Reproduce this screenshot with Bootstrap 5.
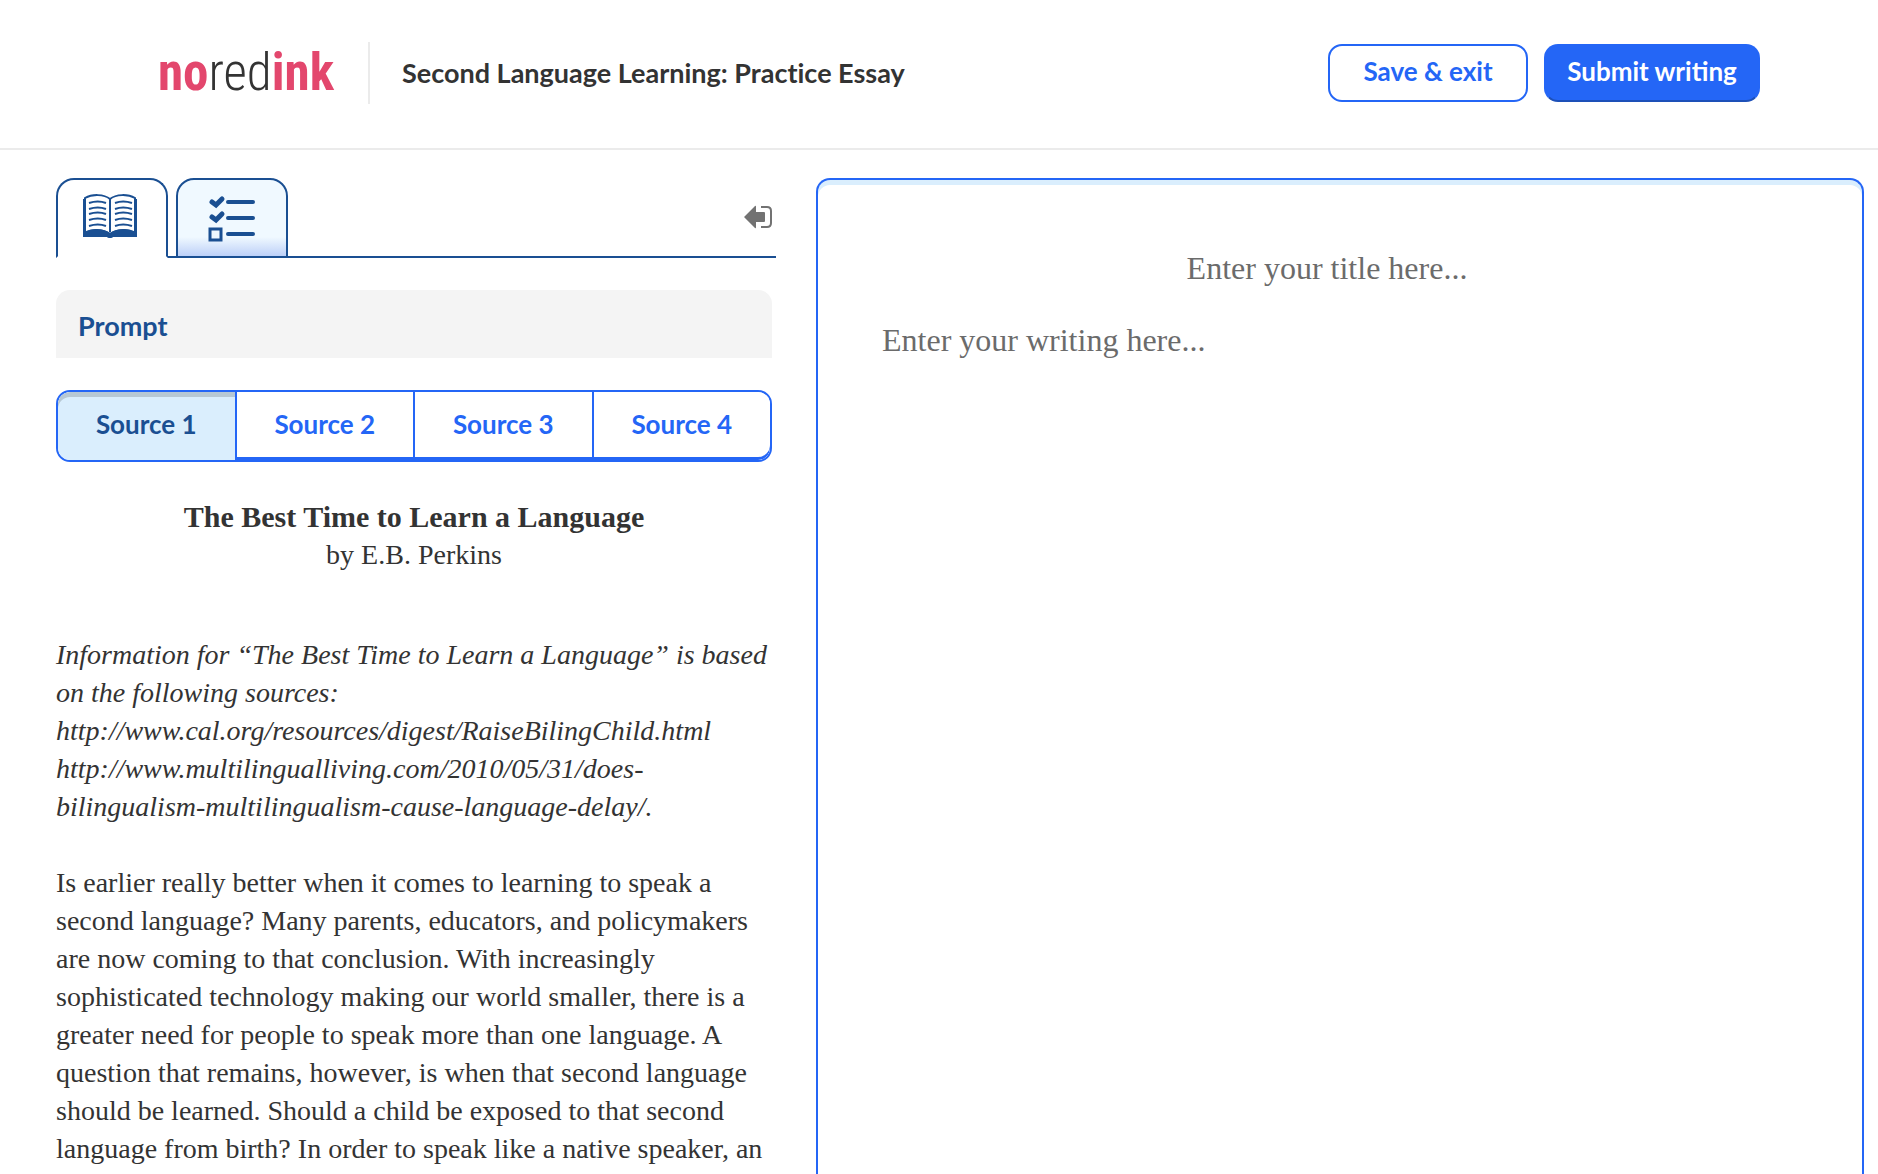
<!DOCTYPE html>
<html lang="en">
<head>
<meta charset="utf-8">
<meta name="viewport" content="width=device-width, initial-scale=1">
<title>Second Language Learning: Practice Essay</title>
<link href="https://cdn.jsdelivr.net/npm/bootstrap@5.3.0/dist/css/bootstrap.min.css" rel="stylesheet">
<style>
:root { --azure: #2466f6; --navy: #1a4f92; --ink: #333; --frost: #daeefd; }
body { font-family: Lato, "Open Sans", sans-serif; font-variant-ligatures: none; color: var(--ink); background: #fff; }
.topbar { border-bottom: 2px solid #ebebeb; padding: 42px 118px 44px 158px; }
.brand { font-family: "Liberation Sans Narrow", "Roboto Condensed", "Liberation Sans", sans-serif; font-weight: 300; font-size: 51px; line-height: 56px; color: var(--ink); }
.brand b { font-weight: 700; color: #e3476d; }
.page-title { font-size: 27px; font-weight: 700; line-height: 62px; border-left: 2px solid #ebebeb; margin: 0 0 0 34px; padding-left: 32px; }
.action { height: 58px; border: 2px solid var(--azure); border-radius: 14px; font-size: 26px; font-weight: 700; line-height: 30px; padding: 0 20px 4px; color: var(--azure); }
.action-exit { min-width: 200px; }
.action-submit { min-width: 216px; background: var(--azure); color: #fff; border-bottom-color: #1d50b8; }
.workspace { padding: 28px 14px 0 56px; gap: 40px; }
.reading { flex: 0 1 720px; min-width: 0; }
.strip { border-bottom: 2px solid var(--navy); gap: 8px; }
.strip .nav-link { width: 112px; height: 80px; padding: 0; margin-bottom: -2px; border: 2px solid var(--navy); border-radius: 18px 18px 0 0; color: var(--navy); background: linear-gradient(#f0f9ff 75%, #bdd0f8); }
.strip .nav-link.active { background: #fff; color: var(--navy); border-color: var(--navy) var(--navy) #fff; }
.collapse-btn { color: #727272; }
.panel-col { padding-right: 4px; }
.prompt-bar { height: 68px; margin-top: 32px; padding: 4px 22px 0; font-size: 27px; font-weight: 700; color: var(--navy); background: #f4f4f4; border: 0; border-radius: 14px 14px 0 0; text-align: left; }
.sources { height: 72px; margin-top: 32px; border: 2px solid var(--azure); border-radius: 14px; overflow: hidden; }
.sources button { flex: 1 1 0; border: 0; border-left: 2px solid var(--azure); background: #fff; color: var(--azure); font-size: 26px; font-weight: 700; padding: 0 0 4px; box-shadow: inset 0 -3px var(--azure); }
.sources button:first-child { border-left: 0; border-radius: 12px 0 0 12px; background: var(--frost); color: var(--navy); box-shadow: inset 0 5px #b7c8d4; }
.sources button:last-child { border-radius: 0 0 12px 0; }
.serif { font-family: Georgia, "Liberation Serif", serif; }
.passage { font-size: 28px; line-height: 38px; padding-top: 36px; }
.passage h1 { font-size: 30px; line-height: 38px; font-weight: 700; margin: 0; }
.passage p { margin: 0 0 38px; }
.passage .byline { margin-bottom: 62px; }
.editor { border: 2px solid var(--azure); border-bottom: 0; border-radius: 14px 14px 0 0; box-shadow: inset 0 5px var(--frost); padding: 62px 90px 0 64px; }
.editor input, .editor textarea { border: 0; outline: 0; background: transparent; padding: 0; width: 100%; font-size: 32px; line-height: 48px; color: var(--ink); resize: none; }
.editor input { height: 52px; text-align: center; }
.editor textarea { margin-top: 22px; }
.editor ::placeholder { color: #6b6b6b; opacity: 1; }
</style>
<script src="https://cdn.jsdelivr.net/npm/bootstrap@5.3.0/dist/js/bootstrap.bundle.min.js"></script>
</head>
<body class="vh-100 d-flex flex-column overflow-hidden">
<header class="topbar">
  <div class="d-flex align-items-center">
    <a href="#" class="brand text-decoration-none"><b>no</b>red<b>ink</b></a>
    <h2 class="page-title">Second Language Learning: Practice Essay</h2>
    <div class="ms-auto d-flex gap-3">
      <button type="button" class="action action-exit bg-white">Save &amp; exit</button>
      <button type="button" class="action action-submit">Submit writing</button>
    </div>
  </div>
</header>
<main class="workspace d-flex flex-grow-1 overflow-hidden">
  <section class="reading">
    <div class="strip nav nav-tabs flex-nowrap" role="tablist">
      <button type="button" class="nav-link active" role="tab" aria-label="Sources" aria-selected="true">
        <svg width="60" height="44" viewBox="2 0 60 44" fill="none" stroke="currentColor" stroke-width="2" class="d-block mx-auto mb-1">
          <path d="M30 5C24 0 12 0 5 4v35c8-4 18-4 25 1 7-5 17-5 25-1V4C48 0 36 0 30 5v33"/>
          <path d="M4 5v37h23q3 2 6 0h23V5"/>
          <path d="M4 38c8-4 18-4 26 1 8-5 18-5 26-1v5H33q-3 2-6 0H4z" fill="currentColor" stroke="none"/>
          <path d="M9 9q9-3 17 0M9 15q9-3 17 0M9 20q9-3 17 0M9 26q9-3 17 0M9 32q9-3 17 0M35 9q8-3 17 0M35 15q8-3 17 0M35 20q8-3 17 0M35 26q8-3 17 0M35 32q8-3 17 0"/>
        </svg>
      </button>
      <button type="button" class="nav-link" role="tab" aria-label="Checklist" aria-selected="false">
        <svg width="48" height="48" viewBox="0 0 48 48" fill="none" stroke="currentColor" stroke-width="4" stroke-linecap="round" class="d-block mx-auto">
          <path d="M20 8h25M20 24h25M20 40h25"/>
          <path d="M4 8l4 3 6-6M4 23l4 3 6-6" stroke-width="5"/>
          <path d="M2 35h11v11H2z" stroke-width="3"/>
        </svg>
      </button>
      <button type="button" class="collapse-btn btn p-0 border-0 ms-auto me-1" aria-label="Collapse panel">
        <svg width="28" height="24" viewBox="0 0 28 24" class="d-block">
          <path d="M0 12L11 1q1-1 1 1v5h8q1 0 1 1v8q0 1-1 1h-8v5q0 2-1 1z" fill="currentColor"/>
          <path d="M17 2h6q4 0 4 4v12q0 4-4 4h-6" fill="none" stroke="currentColor" stroke-width="2"/>
        </svg>
      </button>
    </div>
    <div class="panel-col d-flex flex-column">
      <button type="button" class="prompt-bar">Prompt</button>
      <div class="sources d-flex" role="group" aria-label="Sources">
        <button type="button" aria-pressed="true">Source 1</button>
        <button type="button">Source 2</button>
        <button type="button">Source 3</button>
        <button type="button">Source 4</button>
      </div>
      <article class="passage serif">
        <h1 class="text-center">The Best Time to Learn a Language</h1>
        <p class="byline text-center">by E.B. Perkins</p>
        <p class="fst-italic">Information for “The Best Time to Learn a Language” is based<br>on the following sources:<br>http://www.cal.org/resources/digest/RaiseBilingChild.html<br>http://www.multilingualliving.com/2010/05/31/does-<br>bilingualism-multilingualism-cause-language-delay/.</p>
        <p>Is earlier really better when it comes to learning to speak a<br>second language? Many parents, educators, and policymakers<br>are now coming to that conclusion. With increasingly<br>sophisticated technology making our world smaller, there is a<br>greater need for people to speak more than one language. A<br>question that remains, however, is when that second language<br>should be learned. Should a child be exposed to that second<br>language from birth? In order to speak like a native speaker, an</p>
      </article>
    </div>
  </section>
  <section class="editor serif flex-grow-1 d-flex flex-column">
    <input type="text" aria-label="Title" placeholder="Enter your title here...">
    <textarea class="flex-grow-1" aria-label="Writing" placeholder="Enter your writing here..."></textarea>
  </section>
</main>
</body>
</html>
